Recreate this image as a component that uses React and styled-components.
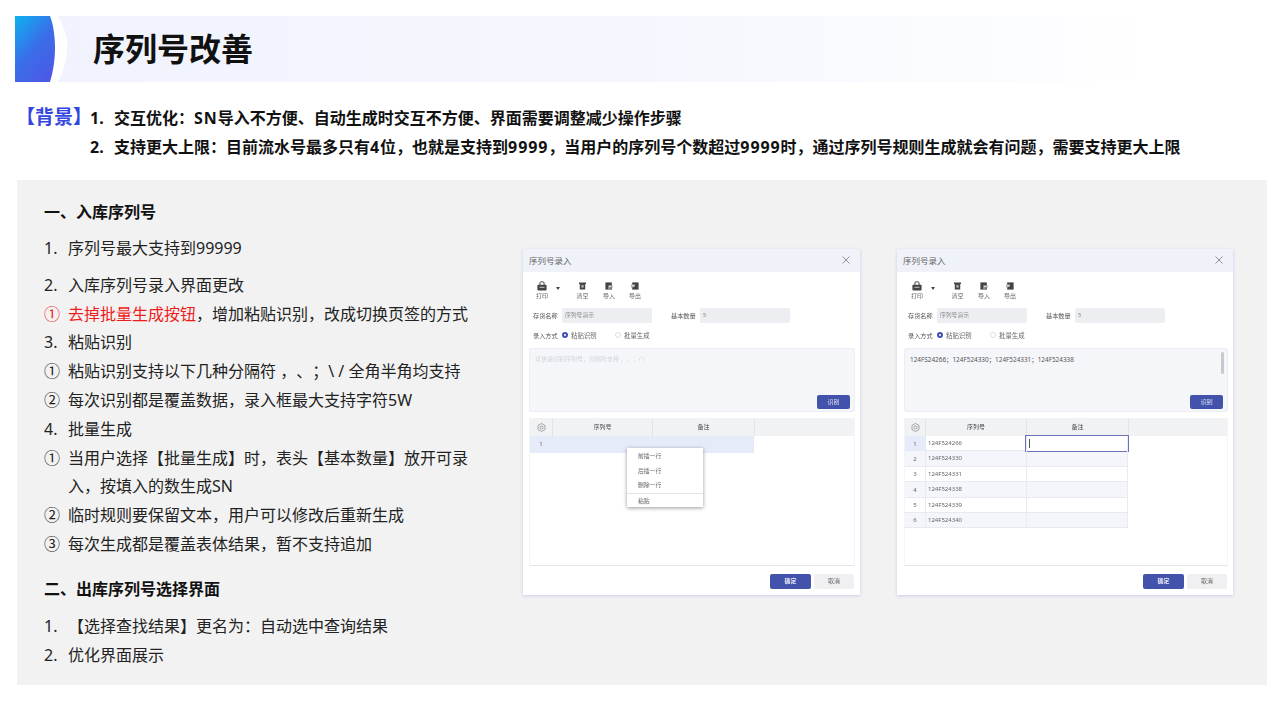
import React from 'react';
import styled, { createGlobalStyle } from 'styled-components';

const GlobalStyle = createGlobalStyle`
  html, body {
    margin: 0;
    background: #fff;
    font-family: "Noto Sans", "Noto Sans CJK SC", sans-serif;
    color: #1a1a1a;
    text-spacing-trim: space-all;
  }
`;

const listTop = [
  { mark: '1.', text: '序列号最大支持到99999', gap: 7 },
  { mark: '2.', text: '入库序列号录入界面更改', gap: 8 },
  { mark: '①', red: '去掉批量生成按钮', text: '，增加粘贴识别，改成切换页签的方式' },
  { mark: '3.', text: '粘贴识别' },
  { mark: '①', text: '粘贴识别支持以下几种分隔符 ，、；\\ / 全角半角均支持' },
  { mark: '②', text: '每次识别都是覆盖数据，录入框最大支持字符5W' },
  { mark: '4.', text: '批量生成' },
  { mark: '①', text: '当用户选择【批量生成】时，表头【基本数量】放开可录入，按填入的数生成SN' },
  { mark: '②', text: '临时规则要保留文本，用户可以修改后重新生成' },
  { mark: '③', text: '每次生成都是覆盖表体结果，暂不支持追加' },
];

const listBottom = [
  { mark: '1.', text: '【选择查找结果】更名为：自动选中查询结果', gap: 8 },
  { mark: '2.', text: '优化界面展示' },
];

const serials = ['124F524266', '124F524330', '124F524331', '124F524338', '124F524339', '124F524340'];

const PrintIcon = () => (
  <svg width="10" height="10" viewBox="0 0 12 12">
    <path d="M3.5 5V2.500a1.500 1.500 0 0 1 1.500-1.500h2a1.500 1.500 0 0 1 1.500 1.500V5" fill="none" stroke="#444" strokeWidth="1.200" />
    <rect x="0.500" y="4.500" width="11" height="7" rx="1" fill="#444" />
    <rect x="3" y="7" width="6" height="1" fill="#ddd" />
  </svg>
);

const ClearIcon = () => (
  <svg width="7" height="8" viewBox="0 0 9 10">
    <rect x="0" y="0.500" width="9" height="2" fill="#444" />
    <rect x="1" y="2.500" width="7" height="7" fill="#444" />
    <rect x="3" y="4" width="3" height="3" fill="#bbb" />
  </svg>
);

const ImportIcon = () => (
  <svg width="8" height="8" viewBox="0 0 10 10">
    <rect x="0.500" y="0.500" width="8" height="9" fill="#444" />
    <path d="M4 4h5.500v3H7v2.500H4z" fill="#999" />
    <path d="M5 5.500h3" stroke="#fff" strokeWidth="1" />
  </svg>
);

const ExportIcon = () => (
  <svg width="8" height="8" viewBox="0 0 10 10">
    <rect x="1.500" y="0.500" width="8" height="9" fill="#444" />
    <path d="M0 3h5v3H3v1H0z" fill="#aaa" />
    <path d="M1 4.500h3" stroke="#fff" strokeWidth="1" />
  </svg>
);

const GearIcon = () => (
  <svg width="9" height="9" viewBox="0 0 10 10" fill="none" stroke="#777" strokeWidth="0.700">
    <path d="M5 0.500l3.900 2.250v4.500L5 9.500 1.100 7.250v-4.500z" />
    <circle cx="5" cy="5" r="1.700" />
  </svg>
);

const CloseIcon = () => (
  <svg width="8" height="8" viewBox="0 0 8 8" stroke="#888" strokeWidth="0.900">
    <path d="M0.500 0.500l7 7M7.500 0.500l-7 7" />
  </svg>
);

const BannerMark = () => (
  <MarkSvg width="53" height="66" viewBox="0 0 53 66">
    <defs>
      <linearGradient id="bannerBlue" x1="0" y1="0" x2="0.700" y2="1">
        <stop offset="0" stopColor="#0db2f2" />
        <stop offset="0.550" stopColor="#3a6ee8" />
        <stop offset="1" stopColor="#4b5ae6" />
      </linearGradient>
    </defs>
    <path d="M0 0H43C50 14 54 24 52 33C52 44 48 56 43 66H0Z" fill="#fff" />
    <path d="M0 0H35C39 10 40 24 40 33C40 44 38 56 35 66H0Z" fill="url(#bannerBlue)" />
  </MarkSvg>
);

const Dialog = ({ content, rows, menu, narrow }) => (
  <DialogBox $narrow={narrow}>
    <DialogTitle>
      序列号录入
      <CloseIcon />
    </DialogTitle>
    <DialogBody $narrow={narrow}>
      <Toolbar>
        <Tool $width={26}>
          <ToolGlyph><PrintIcon /></ToolGlyph>打印
        </Tool>
        <Caret />
        <Tool $width={27}>
          <ToolGlyph><ClearIcon /></ToolGlyph>清空
        </Tool>
        <Tool $width={26}>
          <ToolGlyph><ImportIcon /></ToolGlyph>导入
        </Tool>
        <Tool $width={26}>
          <ToolGlyph><ExportIcon /></ToolGlyph>导出
        </Tool>
      </Toolbar>
      <FieldRow>
        <FieldLabel>存货名称</FieldLabel>
        <FieldInput>序列号演示</FieldInput>
        <FieldLabel $gap={15}>基本数量</FieldLabel>
        <FieldInput>5</FieldInput>
      </FieldRow>
      <RadioRow>
        <FieldLabel>录入方式</FieldLabel>
        <RadioDot $on />
        <RadioText $width={44}>粘贴识别</RadioText>
        <RadioDot />
        <RadioText>批量生成</RadioText>
      </RadioRow>
      <TextArea>
        {content ? <AreaText>{content}</AreaText> : <AreaHint>可快速识别序列号，分隔符支持 ，、；/ \</AreaHint>}
        {content && <ScrollThumb />}
        <RecognizeButton>识别</RecognizeButton>
      </TextArea>
      <Table>
        <HeadRow $narrow={narrow}>
          <IndexCell $head><GearIcon /></IndexCell>
          <HeadCell>序列号</HeadCell>
          <HeadCell>备注</HeadCell>
          <HeadFill />
        </HeadRow>
        {rows.map((row, i) => (
          <BodyRow key={i} $narrow={narrow} $striped={i % 2 === 1} $tall={menu}>
            <IndexCell $active={i === 0}>{i + 1}</IndexCell>
            <SerialCell>{row}</SerialCell>
            <NoteCell $editing={i === 0 && !menu}>{i === 0 && !menu && <EditCaret />}</NoteCell>
          </BodyRow>
        ))}
        {menu && (
          <ContextMenu>
            <MenuItem>前插一行</MenuItem>
            <MenuItem>后插一行</MenuItem>
            <MenuItem>删除一行</MenuItem>
            <MenuLine />
            <MenuItem>粘贴</MenuItem>
          </ContextMenu>
        )}
      </Table>
      <Footer>
        <OkButton>确定</OkButton>
        <CancelButton>取消</CancelButton>
      </Footer>
    </DialogBody>
  </DialogBox>
);

const TextRows = ({ items }) =>
  items.map((item, i) => (
    <ListRow key={i} $gap={item.gap}>
      <Mark $red={item.red}>{item.mark}</Mark>
      <ListText>
        {item.red && <RedText>{item.red}</RedText>}
        {item.text}
      </ListText>
    </ListRow>
  ));

export default function App() {
  return (
    <Page>
      <GlobalStyle />
      <Banner>
        <BannerMark />
        <Title>序列号改善</Title>
      </Banner>
      <Background>
        <BackgroundTag>【背景】</BackgroundTag>
        <BackgroundList>
          <BackgroundRow>
            <BackgroundNum>1.</BackgroundNum>交互优化：<Latin>SN</Latin>导入不方便、自动生成时交互不方便、界面需要调整减少操作步骤
          </BackgroundRow>
          <BackgroundRow>
            <BackgroundNum>2.</BackgroundNum>支持更大上限：目前流水号最多只有<Latin>4</Latin>位，也就是支持到<Latin>9999</Latin>，当用户的序列号个数超过<Latin>9999</Latin>时，通过序列号规则生成就会有问题，需要支持更大上限
          </BackgroundRow>
        </BackgroundList>
      </Background>
      <Panel>
        <Notes>
          <Heading>一、入库序列号</Heading>
          <TextRows items={listTop} />
          <Heading $gap={16}>二、出库序列号选择界面</Heading>
          <TextRows items={listBottom} />
        </Notes>
        <Dialogs>
          <Dialog rows={['']} menu />
          <Dialog rows={serials} narrow content="124FS24266；124F524330；124F524331；124F524338" />
        </Dialogs>
      </Panel>
    </Page>
  );
}

//Styles
const Page = styled.div`
  width: 1280px;
  height: 720px;
  overflow: hidden;
  padding: 16px 13px 0 15px;
  box-sizing: border-box;
`;

const Banner = styled.div`
  display: flex;
  align-items: center;
  width: 1135px;
  height: 66px;
  background: linear-gradient(90deg, #f0f3fd 0%, #f5f7fe 55%, #fbfcff 85%, #ffffff 100%);
`;

const MarkSvg = styled.svg`
  flex: none;
`;

const Title = styled.h1`
  margin: 0 0 0 25px;
  font-size: 32px;
  line-height: 66px;
  font-weight: 700;
  color: #111;
`;

const Background = styled.div`
  display: flex;
  align-items: flex-start;
  margin-top: 22px;
`;

const BackgroundTag = styled.div`
  width: 75px;
  padding-left: 1px;
  box-sizing: border-box;
  font-size: 19px;
  line-height: 27px;
  font-weight: 700;
  color: #3346e0;
  white-space: nowrap;
`;

const BackgroundList = styled.div`
  display: flex;
  flex-direction: column;
`;

const BackgroundRow = styled.div`
  font-size: 16px;
  line-height: 29px;
  font-weight: 700;
  color: #111;
  white-space: nowrap;
`;

const BackgroundNum = styled.span`
  display: inline-block;
  width: 24px;
`;

const Latin = styled.span`
  letter-spacing: 0.9px;
`;

const Panel = styled.div`
  display: flex;
  width: 1250px;
  height: 505px;
  margin: 18px 0 0 2px;
  padding: 18px 0 0 27px;
  box-sizing: border-box;
  background: #f2f2f2;
`;

const Notes = styled.div`
  flex: none;
  width: 479px;
  display: flex;
  flex-direction: column;
`;

const Heading = styled.div`
  font-size: 16px;
  line-height: 29px;
  font-weight: 700;
  color: #111;
  margin-top: ${props => props.$gap || 0}px;
`;

const ListRow = styled.div`
  display: grid;
  grid-template-columns: 24px 401px;
  font-size: 16px;
  line-height: 28.8px;
  margin-top: ${props => props.$gap || 0}px;
`;

const Mark = styled.span`
  color: ${props => (props.$red ? '#f01c1c' : '#222')};
`;

const ListText = styled.span`
  color: #222;
`;

const RedText = styled.span`
  color: #f01c1c;
`;

const Dialogs = styled.div`
  display: flex;
  align-items: flex-start;
  gap: 37px;
  padding-top: 51px;
`;

const DialogBox = styled.div`
  width: ${props => (props.$narrow ? 336 : 337)}px;
  height: 346px;
  display: flex;
  flex-direction: column;
  background: #fff;
  box-shadow: 0 1px 3px rgba(110, 120, 220, 0.3);
  filter: blur(0.4px);
  color: #444;
`;

const DialogTitle = styled.div`
  flex: none;
  height: 21px;
  padding: 0 10px 2px 6px;
  display: flex;
  align-items: center;
  justify-content: space-between;
  background: #eff2f9;
  font-size: 8.500px;
  color: #666;
`;

const DialogBody = styled.div`
  flex: 1;
  display: flex;
  flex-direction: column;
  padding: 0 5px 0 ${props => (props.$narrow ? 7 : 6)}px;
`;

const Toolbar = styled.div`
  height: 36px;
  display: flex;
  align-items: flex-start;
  padding-top: 8px;
  box-sizing: border-box;
`;

const Tool = styled.div`
  width: ${props => props.$width}px;
  display: flex;
  flex-direction: column;
  align-items: center;
  font-size: 6px;
  line-height: 8px;
  color: #666;
`;

const ToolGlyph = styled.div`
  height: 12px;
  display: flex;
  align-items: center;
`;

const Caret = styled.span`
  width: 0;
  height: 0;
  margin: 7px 9px 0 1px;
  border-left: 2.500px solid transparent;
  border-right: 2.500px solid transparent;
  border-top: 3px solid #444;
`;

const FieldRow = styled.div`
  height: 15px;
  display: flex;
  align-items: center;
`;

const FieldLabel = styled.span`
  width: 33px;
  padding-left: 4px;
  margin-left: ${props => props.$gap || 0}px;
  box-sizing: border-box;
  font-size: 6.200px;
  white-space: nowrap;
  color: #555;
`;

const FieldInput = styled.div`
  width: 90px;
  height: 15px;
  padding-left: 3px;
  box-sizing: border-box;
  background: #eceef2;
  border-radius: 2px;
  font-size: 5.800px;
  line-height: 14px;
  color: #888;
`;

const RadioRow = styled.div`
  height: 14px;
  margin-top: 5px;
  display: flex;
  align-items: center;
`;

const RadioDot = styled.span`
  width: 6px;
  height: 6px;
  margin-right: 3px;
  box-sizing: border-box;
  border-radius: 50%;
  background: #fff;
  border: ${props => (props.$on ? '2px solid #3f51b5' : '1px solid #d8dce8')};
`;

const RadioText = styled.span`
  ${props => props.$width && `width: ${props.$width}px;`}
  font-size: 6.400px;
  color: #666;
`;

const TextArea = styled.div`
  position: relative;
  height: 64px;
  margin-top: 6px;
  box-sizing: border-box;
  padding: 6px 5px;
  background: #f5f6fa;
  border: 1px solid #eceef4;
  border-radius: 2px;
`;

const AreaHint = styled.div`
  font-size: 6px;
  line-height: 9px;
  color: #d0d2d8;
`;

const AreaText = styled.div`
  font-size: 6.400px;
  line-height: 9px;
  color: #555;
`;

const ScrollThumb = styled.span`
  position: absolute;
  top: 3px;
  right: 3px;
  width: 3px;
  height: 22px;
  background: #c8c9d0;
  border-radius: 2px;
`;

const RecognizeButton = styled.div`
  position: absolute;
  right: 4px;
  bottom: 2px;
  width: 33px;
  height: 14px;
  background: #4353ab;
  border-radius: 2px;
  color: #dfe2f5;
  font-size: 6px;
  line-height: 14px;
  text-align: center;
`;

const Table = styled.div`
  position: relative;
  height: 148px;
  margin-top: 6px;
  box-sizing: border-box;
  border-bottom: 1px solid #e4e6ea;
  border-left: 1px solid #f4f4f6;
  border-right: 1px solid #f4f4f6;
`;

const HeadRow = styled.div`
  display: grid;
  grid-template-columns: ${props => (props.$narrow ? '20px 101px' : '22px 100px')} 102px 1fr;
  height: 18px;
  background: #f1f2f4;
`;

const HeadCell = styled.div`
  border-left: 1px solid #e2e4e8;
  font-size: 6px;
  line-height: 18px;
  text-align: center;
  color: #444;
`;

const HeadFill = styled.div`
  border-left: 1px solid #e2e4e8;
`;

const BodyRow = styled.div`
  display: grid;
  grid-template-columns: ${props => (props.$narrow ? '20px 101px' : '22px 100px')} 102px;
  width: ${props => (props.$narrow ? 223 : 224)}px;
  height: ${props => (props.$tall ? 16.500 : 15.400)}px;
  box-sizing: border-box;
  background: ${props => (props.$tall ? '#e6ebfa' : props.$striped ? '#f5f6fb' : '#fff')};
  border-bottom: 1px solid ${props => (props.$tall ? 'transparent' : '#e8eaf2')};
`;

const IndexCell = styled.div`
  display: flex;
  align-items: center;
  justify-content: center;
  background: ${props => (props.$active ? '#e6ebfa' : 'transparent')};
  font-size: 6px;
  color: #666;
`;

const SerialCell = styled.div`
  padding-left: 2px;
  border-left: 1px solid #e8eaf2;
  font-size: 6px;
  line-height: 15px;
  color: #666;
`;

const NoteCell = styled.div`
  position: relative;
  border-left: 1px solid #e8eaf2;
  border-right: 1px solid #e8eaf2;
  ${props => props.$editing && `
    background: #fff;
    outline: 1px solid #6a72b8;
  `}
`;

const EditCaret = styled.span`
  position: absolute;
  left: 2px;
  top: 3px;
  width: 1px;
  height: 9px;
  background: #555;
`;

const ContextMenu = styled.div`
  position: absolute;
  left: 97px;
  top: 30px;
  width: 76px;
  height: 59px;
  padding-top: 1px;
  box-sizing: border-box;
  background: #fff;
  box-shadow: 0 1px 4px rgba(0, 0, 0, 0.4);
`;

const MenuItem = styled.div`
  height: 14.500px;
  padding-left: 11px;
  font-size: 5.800px;
  line-height: 14.500px;
  color: #666;
`;

const MenuLine = styled.div`
  height: 1px;
  background: #e4e4e4;
`;

const Footer = styled.div`
  display: flex;
  justify-content: flex-end;
  gap: 3px;
  margin-top: 8px;
  padding-right: 1px;
`;

const OkButton = styled.div`
  width: 41px;
  height: 15px;
  background: #4353ab;
  border-radius: 2px;
  color: #e6e8f6;
  font-size: 6px;
  font-weight: 700;
  line-height: 15px;
  text-align: center;
`;

const CancelButton = styled.div`
  width: 40px;
  height: 15px;
  background: #f0f0f2;
  border-radius: 2px;
  color: #666;
  font-size: 6px;
  line-height: 15px;
  text-align: center;
`;
